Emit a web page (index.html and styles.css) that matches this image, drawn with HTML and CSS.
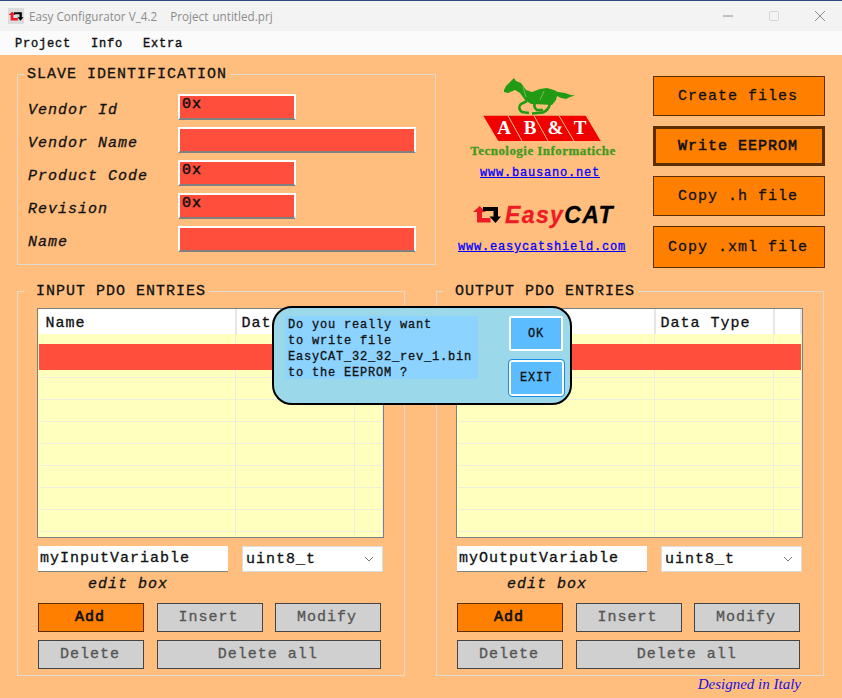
FILE: index.html
```html
<!DOCTYPE html>
<html lang="en">
<head>
<meta charset="UTF-8">
<meta name="viewport" content="width=device-width, initial-scale=1.0">
<title>Easy Configurator</title>
<link rel="stylesheet" href="styles.css">
</head>
<body>
<div class="window">

<!-- Title bar -->
<header class="titlebar">
<span class="app-icon">
<svg width="16" height="15" viewBox="474 205 30 20">
<path d="M481.7 206 L488 212 L484 212 L484 218 L492.5 218 L492.5 222.5 L479 222.5 L479 212 L475 212 Z" fill="#ed1c24"/>
<path d="M485 207 L500 207 L500 216.5 L503 216.5 L497.5 223 L491.5 216.5 L495.5 216.5 L495.5 211 L485 211 Z" fill="#000"/>
</svg>
</span>
<span class="title-text">Easy Configurator V_4.2</span>
<span class="title-text title-project">Project&nbsp; untitled.prj</span>
<div class="win-controls">
<svg width="12" height="12" viewBox="0 0 12 12"><path d="M1 6 H11" stroke="#8c8c8c"/></svg>
<svg width="12" height="12" viewBox="0 0 12 12"><rect x="1.5" y="1.5" width="9" height="9" rx="1" fill="none" stroke="#d4d4d4"/></svg>
<svg width="12" height="12" viewBox="0 0 12 12"><path d="M1 1 L11 11 M11 1 L1 11" stroke="#8c8c8c"/></svg>
</div>
</header>

<!-- Menu -->
<nav class="menubar">
<span>Project</span>
<span>Info</span>
<span>Extra</span>
</nav>

<main class="content">

<div class="top-area">
<!-- Slave identification -->
<fieldset class="group slave">
<legend>SLAVE IDENTIFICATION</legend>
<div class="slave-rows">
<div class="slave-row"><label>Vendor Id</label><input class="field short" value="0x"></div>
<div class="slave-row"><label>Vendor Name</label><input class="field long" value=""></div>
<div class="slave-row"><label>Product Code</label><input class="field short" value="0x"></div>
<div class="slave-row"><label>Revision</label><input class="field short" value="0x"></div>
<div class="slave-row"><label>Name</label><input class="field long" value=""></div>
</div>
</fieldset>

<!-- Logos -->
<div class="logos">
<svg class="abt-logo" width="120" height="66" viewBox="484 76 120 66">
<path d="M505 90 L507 86 L512 81 L515 78 L517 81 L522 83 L527 90 L533 92 L541 89 L548 88 L555 90 L559 92 L566 93 L572 95 L576 95.5 L571 97 L567 99 L562 98 L558 96 L557 100 L553 105 L544 104.500 L532 104 L526 100 L521 93 L516 90 L509 93 L505 92 Z" fill="#239a13"/>
<path d="M551 103 Q550 110 544 112.500 L533 113.500 M528 101 L522 104 Q518 108 523 112 L530 113 M536 103 Q534 107 538 110 L544 110" fill="none" stroke="#239a13" stroke-width="2.6"/>
<path d="M524 87 L527 97 M545 91 L541 100" stroke="#8fd07f" stroke-width="0.7"/>
<path d="M484.300 115.700 H586.700 L601.700 141 H499.300 Z" fill="#f00000"/>
<path d="M509 115.700 L523 141 M535 115.700 L549 141 M560 115.700 L575 141" stroke="#ffbe7d"/>
<text class="abt-letter" x="505" y="134">A</text>
<text class="abt-letter" x="531" y="134">B</text>
<text class="abt-letter" x="556.500" y="134">&amp;</text>
<text class="abt-letter" x="581" y="134">T</text>
</svg>
<div class="abt-name">Tecnologie Informatiche</div>
<a class="site-link bausano" href="#">www.bausano.net</a>
<div class="easycat">
<svg width="30" height="20" viewBox="474 205 30 20">
<path d="M481.700 206 L488 212 L484 212 L484 218 L492.500 218 L492.500 222.500 L479 222.500 L479 212 L475 212 Z" fill="#ed1c24"/>
<path d="M485 207 L500 207 L500 216.500 L503 216.500 L497.500 223 L491.500 216.500 L495.500 216.500 L495.500 211 L485 211 Z" fill="#000"/>
</svg>
<span class="easy">Easy</span><span class="cat">CAT</span>
</div>
<a class="site-link easycat-link" href="#">www.easycatshield.com</a>
</div>

<!-- Main actions -->
<div class="actions">
<button class="btn-main">Create files</button>
<button class="btn-main btn-focus">Write EEPROM</button>
<button class="btn-main">Copy .h file</button>
<button class="btn-main btn-tall">Copy .xml file</button>
</div>
</div>

<div class="pdo-area">
<!-- Input PDO -->
<fieldset class="group pdo">
<legend class="pdo-legend">INPUT PDO ENTRIES</legend>
<div class="table-box">
<table>
<thead><tr><th>Name</th><th>Data Type</th><th></th></tr></thead>
<tbody>
<tr class="row-top"><td></td><td></td><td></td></tr>
<tr class="row-selected"><td></td><td></td><td></td></tr>
<tr class="row-after"><td></td><td></td><td></td></tr>
<tr><td></td><td></td><td></td></tr>
<tr><td></td><td></td><td></td></tr>
<tr><td></td><td></td><td></td></tr>
<tr><td></td><td></td><td></td></tr>
<tr><td></td><td></td><td></td></tr>
<tr><td></td><td></td><td></td></tr>
<tr><td></td><td></td><td></td></tr>
<tr><td></td><td></td><td></td></tr>
</tbody>
</table>
</div>
<div class="edit-row">
<input class="edit-input" value="myInputVariable">
<div class="select"><span>uint8_t</span>
<svg width="10" height="6" viewBox="0 0 10 6"><path d="M1 1 L5 5 L9 1" fill="none" stroke="#777"/></svg>
</div>
</div>
<div class="edit-caption">edit box</div>
<div class="pdo-buttons">
<button class="btn-add">Add</button>
<button class="btn-grey">Insert</button>
<button class="btn-grey">Modify</button>
<button class="btn-grey">Delete</button>
<button class="btn-grey span-2">Delete all</button>
</div>
</fieldset>

<!-- Output PDO -->
<fieldset class="group pdo">
<legend class="pdo-legend">OUTPUT PDO ENTRIES</legend>
<div class="table-box">
<table>
<thead><tr><th>Name</th><th>Data Type</th><th></th></tr></thead>
<tbody>
<tr class="row-top"><td></td><td></td><td></td></tr>
<tr class="row-selected"><td></td><td></td><td></td></tr>
<tr class="row-after"><td></td><td></td><td></td></tr>
<tr><td></td><td></td><td></td></tr>
<tr><td></td><td></td><td></td></tr>
<tr><td></td><td></td><td></td></tr>
<tr><td></td><td></td><td></td></tr>
<tr><td></td><td></td><td></td></tr>
<tr><td></td><td></td><td></td></tr>
<tr><td></td><td></td><td></td></tr>
<tr><td></td><td></td><td></td></tr>
</tbody>
</table>
</div>
<div class="edit-row">
<input class="edit-input" value="myOutputVariable">
<div class="select"><span>uint8_t</span>
<svg width="10" height="6" viewBox="0 0 10 6"><path d="M1 1 L5 5 L9 1" fill="none" stroke="#777"/></svg>
</div>
</div>
<div class="edit-caption">edit box</div>
<div class="pdo-buttons">
<button class="btn-add">Add</button>
<button class="btn-grey">Insert</button>
<button class="btn-grey">Modify</button>
<button class="btn-grey">Delete</button>
<button class="btn-grey span-2">Delete all</button>
</div>
</fieldset>
</div>

<footer class="credit">Designed in Italy</footer>
</main>

<!-- Confirm dialog -->
<div class="dialog">
<div class="dialog-text">Do you really want<br>to write file<br>EasyCAT_32_32_rev_1.bin<br>to the EEPROM ?</div>
<div class="dialog-buttons">
<button class="dialog-btn">OK</button>
<button class="dialog-btn dialog-btn-focus">EXIT</button>
</div>
</div>

</div>
</body>
</html>
```

FILE: styles.css
```css
* {
box-sizing: border-box;
}
body {
margin: 0;
font-family: "Liberation Mono", monospace;
background-color: #ffbe7d;
-webkit-text-stroke: 0.3px;
}
.window {
position: relative;
width: 842px;
height: 698px;
overflow: hidden;
}

/* title bar */
.titlebar {
display: flex;
align-items: center;
height: 31px;
padding-left: 8px;
background-color: #f3f3f3;
border-top: 1px solid #2b4a80;
}
.app-icon {
display: flex;
align-items: center;
justify-content: center;
width: 16px;
height: 16px;
background-color: #dcdcdc;
}
.title-text {
margin-left: 5px;
font-family: "Open Sans", sans-serif;
font-size: 11.7px;
color: #8c8c8c;
-webkit-text-stroke: 0;
}
.title-project {
margin-left: 13px;
word-spacing: -1px;
}
.win-controls {
display: flex;
gap: 34px;
margin-left: auto;
margin-right: 16px;
}

/* menu */
.menubar {
display: flex;
gap: 20px;
align-items: center;
height: 24px;
padding: 1px 0 0 15px;
background-color: #fbfbfb;
font-size: 12px;
letter-spacing: 0.8px;
color: #111;
-webkit-text-stroke: 0.4px;
}

.content {
height: 643px;
padding: 11px 17px 0;
}
.top-area {
display: flex;
height: 217px;
}

/* grouped boxes */
.group {
margin: 0;
padding: 0;
border: 1px solid #dfd9cf;
min-width: 0;
}
.group legend {
margin-left: 6px;
padding: 0 3px;
font-size: 15px;
letter-spacing: 1px;
line-height: 17px;
color: #111;
}
.slave {
width: 419px;
height: 199px;
}
.slave-rows {
display: flex;
flex-direction: column;
gap: 7px;
padding: 11px 0 0 10px;
}
.slave-row {
display: flex;
height: 26px;
}
.slave-row label {
width: 150px;
padding-top: 8px;
font-size: 15px;
letter-spacing: 1px;
font-style: italic;
color: #111;
}
.field {
height: 26px;
padding: 0 2px 5px;
border: 2px solid #fff;
border-bottom-color: #808080;
background-color: #ff4f3c;
font-family: "Liberation Mono", monospace;
font-size: 15px;
letter-spacing: 1px;
color: #111;
outline: none;
-webkit-text-stroke: 0.5px;
}
.field.short {
width: 118px;
}
.field.long {
width: 238px;
}

/* logos */
.logos {
display: flex;
flex-direction: column;
align-items: center;
width: 214px;
padding-top: 10px;
}
.abt-logo {
display: block;
}
.abt-letter {
font-family: "Liberation Serif", serif;
font-size: 19px;
font-weight: bold;
fill: #fff;
text-anchor: middle;
}
.abt-name {
margin-top: 1px;
font-family: "Liberation Serif", serif;
font-size: 13px;
font-weight: bold;
letter-spacing: 0.45px;
line-height: 15px;
color: #3f9a20;
}
.site-link {
font-size: 12px;
letter-spacing: 0.8px;
line-height: 15px;
color: #0000ff;
text-decoration: underline;
}
.bausano {
margin-top: 8px;
margin-right: 6px;
}
.easycat {
display: flex;
align-items: center;
margin-top: 22px;
height: 24px;
font-family: "Liberation Sans", sans-serif;
font-size: 23px;
font-weight: bold;
font-style: italic;
letter-spacing: 1.4px;
}
.easycat svg {
margin-right: 3px;
}
.easy {
color: #ed1c24;
}
.cat {
color: #000;
}
.easycat-link {
margin-top: 13px;
margin-right: 2px;
}

/* main buttons */
.actions {
display: flex;
flex-direction: column;
gap: 10px;
width: 172px;
margin-left: 3px;
padding-top: 10px;
}
button {
font-family: "Liberation Mono", monospace;
font-size: 15px;
letter-spacing: 1px;
padding: 0 2px 0 0;
cursor: pointer;
-webkit-text-stroke: 0.3px;
}
.btn-main {
height: 40px;
background-color: #ff8000;
border: 1px solid #5c2e00;
color: #111;
}
.btn-focus {
border-width: 3px;
-webkit-text-stroke: 0.6px;
}
.btn-tall {
height: 42px;
}

/* pdo boxes */
.pdo-area {
display: flex;
gap: 31px;
}
.pdo {
width: 388px;
height: 393px;
}
.group .pdo-legend {
padding: 0 3px 0 12px;
}
.table-box {
width: 347px;
height: 230px;
margin: 8px 0 0 19px;
border: 1px solid #808080;
overflow: hidden;
background-color: #ffffbe;
}
table {
width: 345px;
border-collapse: collapse;
table-layout: fixed;
}
th {
height: 25px;
padding: 3px 0 0 7px;
background-color: #fff;
border-right: 2px solid #e6e6e6;
font-size: 15px;
letter-spacing: 1px;
font-weight: normal;
text-align: left;
color: #111;
overflow: hidden;
white-space: nowrap;
}
th:nth-child(1), td:nth-child(1) {
width: 197px;
}
th:nth-child(2), td:nth-child(2) {
width: 119px;
padding-left: 5px;
}
td {
height: 22px;
padding: 0;
border-right: 1px solid #eeeedd;
border-bottom: 1px solid #eeeedd;
}
.row-top td {
height: 10px;
border-bottom: none;
}
.row-selected td {
height: 26px;
background-color: #ff4f3c;
border: none;
}
.row-selected td:first-child {
border-left: 1px solid #ffffbe;
}
.row-after td {
height: 7px;
}
.edit-row {
display: flex;
justify-content: space-between;
width: 345px;
margin: 8px 0 0 20px;
}
.edit-input {
width: 190px;
height: 26px;
padding: 0 2px 1px;
border: none;
border-bottom: 1px solid #808080;
background-color: #fff;
font-family: "Liberation Mono", monospace;
font-size: 15px;
letter-spacing: 1px;
color: #111;
outline: none;
-webkit-text-stroke: 0.3px;
}
.select {
display: flex;
align-items: center;
justify-content: space-between;
width: 141px;
height: 26px;
padding: 0 8px 0 3px;
background-color: #fff;
border: 1px solid #dcdcdc;
font-size: 15px;
letter-spacing: 1px;
color: #111;
}
.edit-caption {
margin: 4px 0 0 70px;
font-size: 15px;
letter-spacing: 1px;
line-height: 17px;
font-style: italic;
color: #111;
}
.pdo-buttons {
display: grid;
grid-template-columns: 106px 106px 106px;
grid-auto-rows: 29px;
column-gap: 12.500px;
row-gap: 8px;
margin: 10px 0 0 20px;
}
.btn-add {
background-color: #ff8000;
border: 1px solid #5c2e00;
color: #111;
-webkit-text-stroke: 0.7px;
}
.btn-grey {
background-color: #d0d0d0;
border: 1px solid #444;
color: #555;
}
.span-2 {
grid-column: span 2;
}

.credit {
padding-right: 24px;
text-align: right;
font-family: "Liberation Serif", serif;
font-size: 15px;
font-style: italic;
line-height: 16px;
color: #1a10e0;
-webkit-text-stroke: 0;
}

/* dialog sits over the tables */
.dialog {
position: absolute;
left: 272px;
top: 306px;
display: flex;
width: 300px;
height: 99px;
padding: 8px 6px 0 11px;
background-color: #9bd8ea;
border: 2px solid #000;
border-radius: 20px;
}
.dialog-text {
width: 193px;
height: 63px;
padding: 1px 0 0 3px;
background-color: #8cd3ff;
font-size: 12px;
letter-spacing: 0.8px;
line-height: 16px;
color: #111;
}
.dialog-buttons {
display: flex;
flex-direction: column;
align-items: center;
gap: 9px;
margin-left: 30px;
width: 56px;
}
.dialog-btn {
width: 54px;
height: 35px;
padding: 0;
background-color: #5bbcff;
border: 2px solid #fff;
border-radius: 2px;
font-size: 12px;
letter-spacing: 0.8px;
color: #111;
}
.dialog-btn-focus {
width: 55px;
height: 36px;
outline: 1px solid #1a8ae8;
border-radius: 3px;
}
```
